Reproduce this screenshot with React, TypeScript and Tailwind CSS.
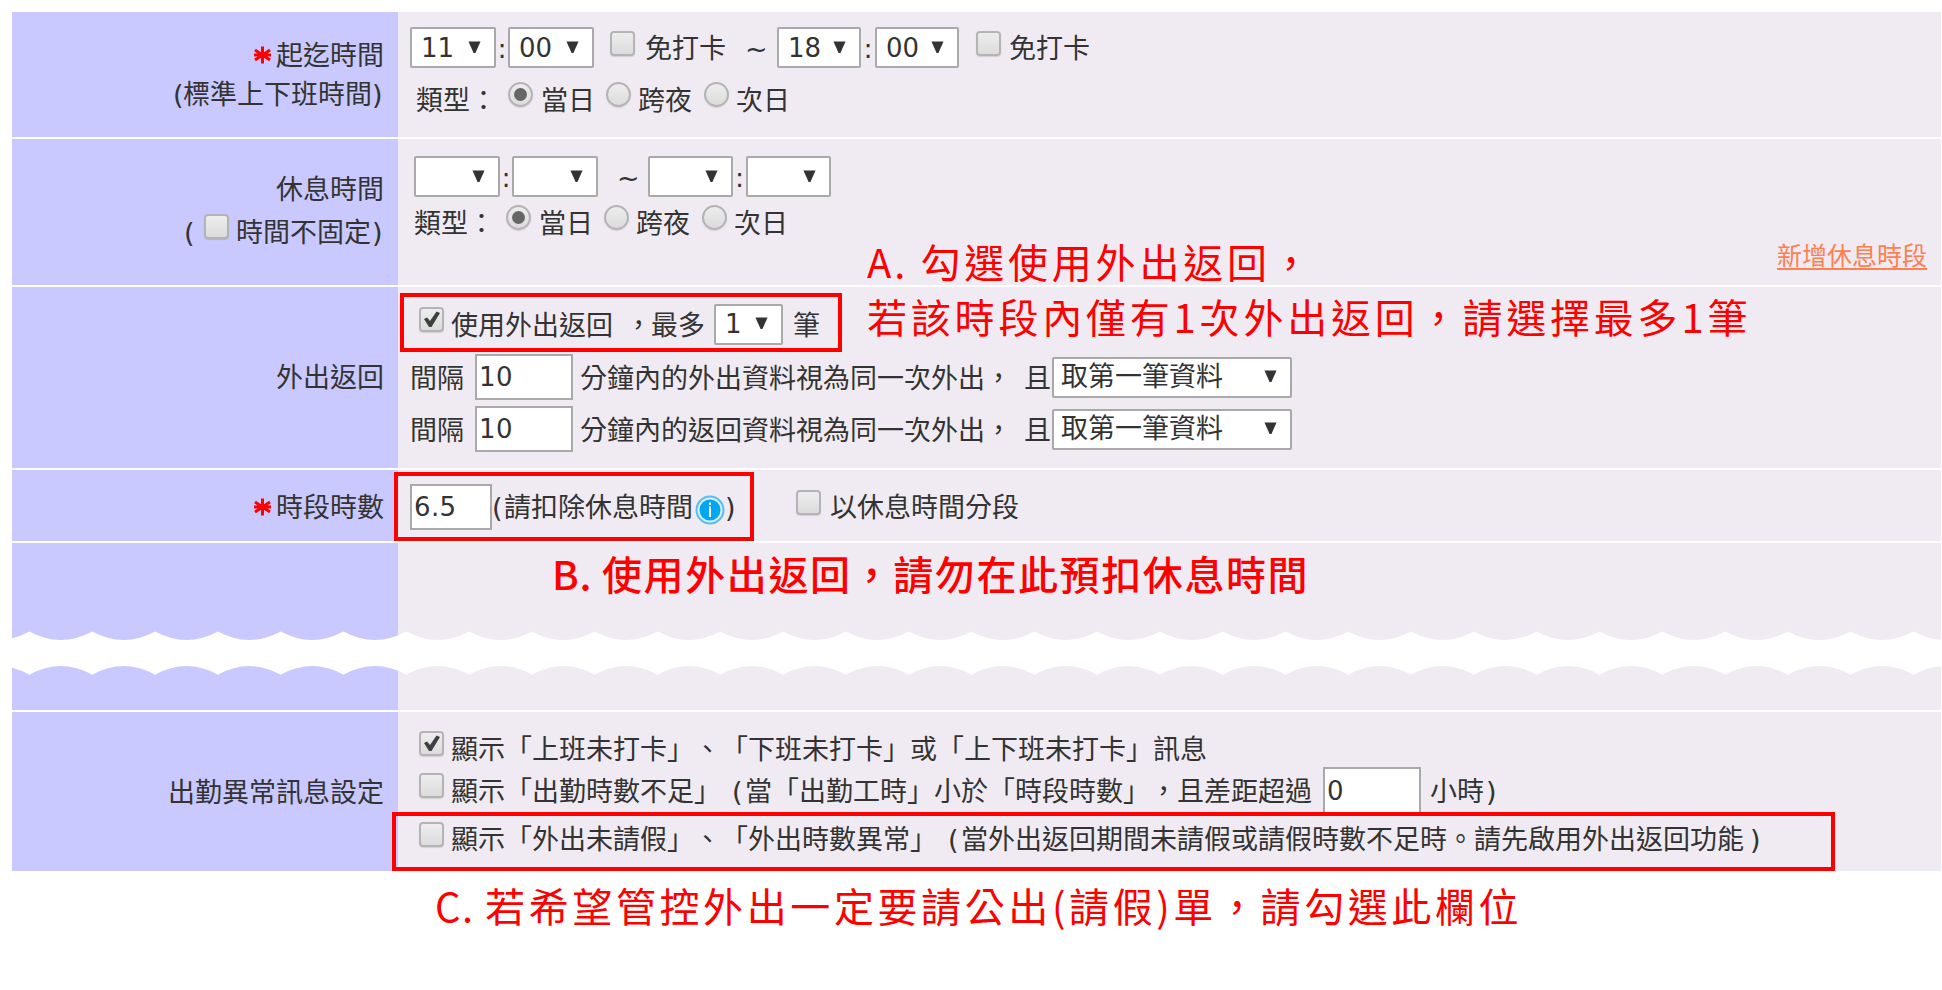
import type { ReactNode } from "react";

const WAVE_STEP = 62.8;
const WAVE_START = 17.5 - WAVE_STEP;
const waves = Array.from({ length: 33 }, (_, i) => WAVE_START + i * WAVE_STEP);

function Txt({ children, className = "" }: { children: ReactNode; className?: string }) {
  return <span className={"mt-[3px] shrink-0 whitespace-pre text-[27px] " + className}>{children}</span>;
}

function Arrow() {
  return (
    <svg width="13" height="13" viewBox="0 0 14 14" className="mb-[1px] shrink-0">
      <path d="M0.5 0.5H13.5L8 13H6Z" fill="#333" />
    </svg>
  );
}

function Select({ value = "", className = "w-[86px] text-[26px]" }: { value?: string; className?: string }) {
  return (
    <div
      className={
        "flex h-[41px] shrink-0 items-center justify-between rounded-[2px] border-2 border-[#a9a9a9] bg-white pr-[13px] pl-[9px] " +
        className
      }
    >
      <span className="whitespace-pre">{value}</span>
      <Arrow />
    </div>
  );
}

function Input({ value, className = "" }: { value: string; className?: string }) {
  return (
    <div
      className={
        "flex h-[46px] shrink-0 items-center border-2 border-[#a9a9a9] bg-white pl-[2px] text-[26px] tracking-[0.4px] " +
        className
      }
    >
      {value}
    </div>
  );
}

function Checkbox({ checked = false, className = "" }: { checked?: boolean; className?: string }) {
  return (
    <span
      className={
        "mb-[9px] flex h-[25px] w-[25px] shrink-0 items-center justify-center rounded-[4px] border-2 border-[#b4b4b4] bg-linear-to-b from-[#ededed] to-[#dcdcdc] shadow-[0_1px_1px_rgba(0,0,0,0.12)] " +
        className
      }
    >
      {checked && (
        <svg width="19" height="19" viewBox="0 0 19 19">
          <path d="M2 9L5 7.5L8 11L14.5 1.5L18 3L9.5 17H7Z" fill="#3f3f3f" />
        </svg>
      )}
    </span>
  );
}

function Radio({ checked = false, className = "" }: { checked?: boolean; className?: string }) {
  return (
    <span
      className={
        "mb-[9px] flex h-[25px] w-[25px] shrink-0 items-center justify-center rounded-full border-2 border-[#b4b4b4] bg-linear-to-b from-[#ededed] to-[#dcdcdc] shadow-[0_1px_1px_rgba(0,0,0,0.12)] " +
        className
      }
    >
      {checked && <span className="h-[13px] w-[13px] rounded-full bg-[#666]" />}
    </span>
  );
}

function DayType() {
  return (
    <>
      <Txt className="w-[92px]">類型：</Txt>
      <Radio checked />
      <Txt className="ml-[8px] w-[65px]">當日</Txt>
      <Radio />
      <Txt className="ml-[7px] w-[66px]">跨夜</Txt>
      <Radio />
      <Txt className="ml-[7px]">次日</Txt>
    </>
  );
}

function Required() {
  return (
    <svg width="19" height="18" viewBox="0 0 19 18" className="mt-[1px] mr-[4px]">
      <path d="M9.5 0.5V17.5M2 4L17 14M17 4L2 14M1 9H18" stroke="red" strokeWidth="3" />
    </svg>
  );
}

function InfoIcon() {
  return (
    <svg width="30" height="30" viewBox="0 0 30 30" className="mt-[7px] shrink-0">
      <circle cx="15" cy="15" r="13.5" fill="#d9eefa" stroke="#5bbdea" strokeWidth="2" />
      <circle cx="15" cy="15" r="10.5" fill="#00a8f0" />
      <path d="M15 11.5V22M15 7.5V10" stroke="white" strokeWidth="2" />
    </svg>
  );
}

function Row({ label, children, className = "" }: { label?: ReactNode; children?: ReactNode; className?: string }) {
  return (
    <div className={"flex " + className}>
      <div className="flex w-[386px] shrink-0 flex-col items-end bg-[#c9c9ff] pr-[14px]">{label}</div>
      <div className="flex flex-1 flex-col bg-[#f0ebf2]">{children}</div>
    </div>
  );
}

function IntervalLine({ kind, className = "" }: { kind: string; className?: string }) {
  return (
    <div className={"flex h-[46px] items-center pl-[12px] " + className}>
      <Txt className="w-[65px]">間隔</Txt>
      <Input value="10" className="w-[98px]" />
      <Txt className="ml-[7px] w-[444px]">{`分鐘內的${kind}資料視為同一次外出，`}</Txt>
      <Txt className="w-[28px]">且</Txt>
      <Select value="取第一筆資料" className="w-[240px] !pl-[7px] text-[27px]" />
    </div>
  );
}

export default function App() {
  return (
    <div className="relative h-[990px] w-[1942px] overflow-hidden bg-white pt-[12px] pl-[12px] font-['DejaVu_Sans','Noto_Sans_CJK_TC',sans-serif] text-[27px] leading-[30px] text-[#333] [text-spacing-trim:space-all]">
      <div className="flex w-[1929px] flex-col gap-[2px]">
        <Row
          className="h-[125px]"
          label={
            <>
              <div className="mt-[27px] flex h-[30px] items-center">
                <Required />
                <Txt>起迄時間</Txt>
              </div>
              <div className="mt-[9px] flex h-[30px] items-center">
                <Txt className="w-[10px]">(</Txt>
                <Txt>標準上下班時間</Txt>
                <Txt className="w-[12px]">)</Txt>
              </div>
            </>
          }
        >
          <div className="mt-[15px] flex h-[41px] items-center pl-[12px]">
            <Select value="11" />
            <Txt className="w-[12px] text-center">:</Txt>
            <Select value="00" />
            <Checkbox className="ml-[16px]" />
            <Txt className="ml-[10px] w-[100px]">免打卡</Txt>
            <Txt className="w-[32px]">~</Txt>
            <Select value="18" className="w-[84px] text-[26px]" />
            <Txt className="w-[14px] text-center">:</Txt>
            <Select value="00" className="w-[84px] text-[26px]" />
            <Checkbox className="ml-[17px]" />
            <Txt className="ml-[8px]">免打卡</Txt>
          </div>
          <div className="mt-[14px] flex h-[34px] items-center pl-[18px]">
            <DayType />
          </div>
        </Row>

        <Row
          className="h-[146px]"
          label={
            <>
              <div className="mt-[34px] flex h-[30px] items-center">
                <Txt>休息時間</Txt>
              </div>
              <div className="mt-[13px] flex h-[30px] items-center">
                <Txt className="w-[20px]">(</Txt>
                <Checkbox />
                <Txt className="ml-[7px] w-[136px]">時間不固定</Txt>
                <Txt className="w-[12px]">)</Txt>
              </div>
            </>
          }
        >
          <div className="mt-[17px] flex h-[41px] items-center pl-[16px]">
            <Select />
            <Txt className="w-[12px] text-center">:</Txt>
            <Select />
            <Txt className="ml-[19px] w-[31px]">~</Txt>
            <Select className="w-[85px]" />
            <Txt className="w-[13px] text-center">:</Txt>
            <Select className="w-[85px]" />
          </div>
          <div className="mt-[8px] flex h-[34px] items-center pl-[16px]">
            <DayType />
          </div>
          <div className="mt-[4px] flex justify-end pr-[14px]">
            <a className="border-b-2 border-[#ff7f50] pt-[3px] text-[25px] leading-[22px] text-[#ff7f50]">新增休息時段</a>
          </div>
        </Row>

        <Row
          className="h-[181px]"
          label={
            <div className="mt-[74px] flex h-[30px] items-center">
              <Txt>外出返回</Txt>
            </div>
          }
        >
          <div className="mt-[6px] ml-[2px] flex h-[59px] w-[442px] items-center border-4 border-[#f00] pt-[3px] pl-[15px]">
            <Checkbox checked />
            <Txt className="ml-[7px] w-[174px]">使用外出返回</Txt>
            <Txt className="w-[26px]">，</Txt>
            <Txt className="w-[63px]">最多</Txt>
            <Select value="1" className="w-[69px] text-[26px]" />
            <Txt className="ml-[10px]">筆</Txt>
          </div>
          <IntervalLine kind="外出" className="mt-[2px]" />
          <IntervalLine kind="返回" className="mt-[6px]" />
        </Row>

        <Row
          className="h-[71px]"
          label={
            <div className="mt-[21px] flex h-[30px] items-center">
              <Required />
              <Txt>時段時數</Txt>
            </div>
          }
        >
          <div className="mt-[2px] flex h-[69px] items-center">
            <div className="relative -ml-[4px] flex h-[69px] w-[360px] shrink-0 items-center border-4 border-[#f00] pl-[12px]">
              <Input value="6.5" className="w-[82px]" />
              <Txt className="w-[12px]">(</Txt>
              <Txt className="w-[191px]">請扣除休息時間</Txt>
              <InfoIcon />
              <Txt>)</Txt>
            </div>
            <Checkbox className="ml-[42px]" />
            <Txt className="ml-[9px]">以休息時間分段</Txt>
          </div>
        </Row>

        <div className="relative">
          <Row className="h-[167px]" />
          {/* torn band between the two parts of the form */}
          <svg className="absolute top-[88px] left-0" width="1930" height="44" viewBox="0 0 1930 44">
            <path
              fill="white"
              d={
                `M${WAVE_START} 0.5` +
                waves.map((x) => `Q${x + WAVE_STEP / 2} 17.5 ${x + WAVE_STEP} 0.5`).join("") +
                `V43.7` +
                waves
                  .slice()
                  .reverse()
                  .map((x) => `Q${x + WAVE_STEP / 2} 26.5 ${x} 43.7`)
                  .join("") +
                "Z"
              }
            />
          </svg>
        </div>

        <Row
          className="h-[159px]"
          label={
            <div className="mt-[64px] flex h-[30px] items-center">
              <Txt>出勤異常訊息設定</Txt>
            </div>
          }
        >
          <div className="mt-[19px] flex h-[34px] items-center pl-[21px]">
            <Checkbox checked />
            <Txt className="ml-[7px]">顯示「上班未打卡」、「下班未打卡」或「上下班未打卡」訊息</Txt>
          </div>
          <div className="mt-[3px] flex h-[44px] items-center pl-[21px]">
            <Checkbox />
            <Txt className="ml-[7px] w-[281px]">顯示「出勤時數不足」</Txt>
            <Txt className="w-[13px]">(</Txt>
            <Txt className="w-[578px]">當「出勤工時」小於「時段時數」，且差距超過</Txt>
            <Input value="0" className="w-[98px] border-b-0" />
            <Txt className="ml-[9px] w-[56px]">小時</Txt>
            <Txt>)</Txt>
          </div>
          <div className="relative -ml-[6px] flex h-[59px] w-[1443px] items-center border-4 border-[#f00] pl-[23px]">
            <Checkbox className="!mb-[15px]" />
            <Txt className="!mt-[-3px] ml-[7px] w-[497px]">顯示「外出未請假」、「外出時數異常」</Txt>
            <Txt className="!mt-[-3px] w-[13px]">(</Txt>
            <Txt className="!mt-[-3px] w-[789px]">當外出返回期間未請假或請假時數不足時。請先啟用外出返回功能</Txt>
            <Txt className="!mt-[-3px]">)</Txt>
          </div>
        </Row>
      </div>

      {/* red notes laid over the form */}
      <div className="absolute top-[234px] left-[867px] font-['Noto_Sans_CJK_TC',sans-serif] text-[40px] leading-[55px] tracking-[3.8px] whitespace-pre text-[#f00]">
        <div>
          <span className="tracking-[3px]">A. </span>勾選使用外出返回，
        </div>
        <div>若該時段內僅有1次外出返回，請選擇最多1筆</div>
      </div>
      <div className="absolute top-[546px] left-[552px] font-['Noto_Sans_CJK_TC',sans-serif] text-[40px] leading-[55px] font-medium tracking-[1.6px] whitespace-pre text-[#f00]">
        <span className="tracking-[0.8px]">B. </span>使用外出返回，請勿在此預扣休息時間
      </div>
      <div className="absolute top-[878px] left-[435px] font-['Noto_Sans_CJK_TC',sans-serif] text-[40px] leading-[55px] tracking-[3.6px] whitespace-pre text-[#f00]">
        <span className="tracking-[1.5px]">C. </span>若希望管控外出一定要請公出(請假)單，請勾選此欄位
      </div>
    </div>
  );
}
